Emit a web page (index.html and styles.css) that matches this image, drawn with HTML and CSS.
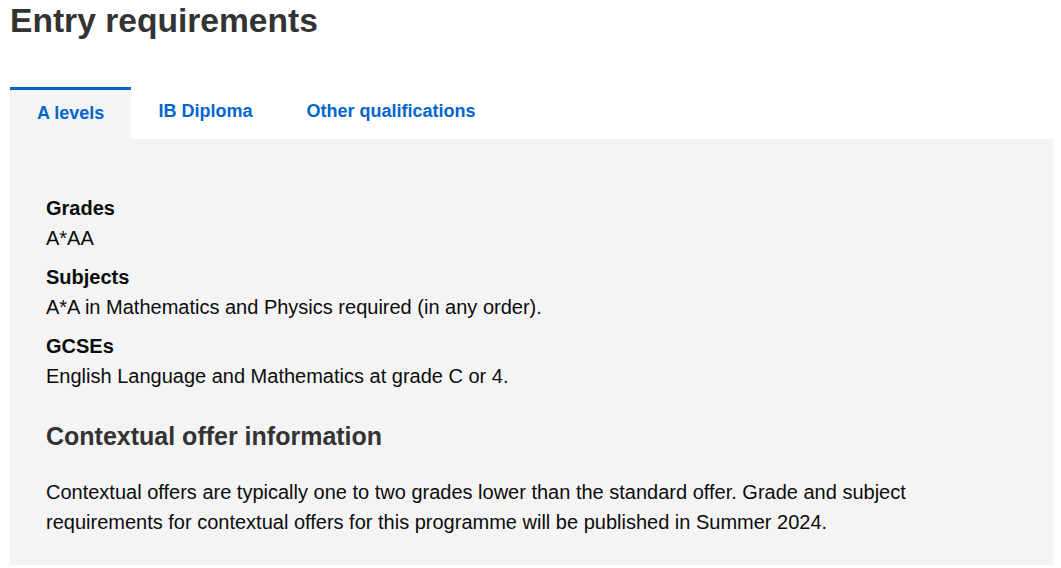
FILE: index.html
```html
<!DOCTYPE html>
<html lang="en">
<head>
    <meta charset="UTF-8">
    <meta name="viewport" content="width=device-width, initial-scale=1.0">
    <title>Entry requirements</title>
    <link rel="stylesheet" href="styles.css">
</head>
<body>
    <section class="entry">
        <h1 class="entry-title">Entry requirements</h1>

        <!-- Tabs -->
        <ul class="tabs">
            <li class="tab active"><a href="#">A levels</a></li>
            <li class="tab"><a href="#">IB Diploma</a></li>
            <li class="tab"><a href="#">Other qualifications</a></li>
        </ul>

        <div class="panel">
            <dl class="reqs">
                <dt>Grades</dt>
                <dd>A*AA</dd>
                <dt>Subjects</dt>
                <dd>A*A in Mathematics and Physics required (in any order).</dd>
                <dt>GCSEs</dt>
                <dd>English Language and Mathematics at grade C or 4.</dd>
            </dl>

            <h2 class="panel-title">Contextual offer information</h2>
            <p class="panel-text">Contextual offers are typically one to two grades lower than the standard offer. Grade and subject requirements for contextual offers for this programme will be published in Summer 2024.</p>
        </div>
    </section>
</body>
</html>
```

FILE: styles.css
```css
body {
    margin: 0 8px 0 10px;
    font-family: "Liberation Sans", Arial, sans-serif;
    background-color: #ffffff;
    color: #0b0c0c;
}

.entry-title {
    margin: 2px 0 0;
    font-size: 33.6px;
    line-height: 38px;
    color: #333333;
}

/* Tabs */
.tabs {
    list-style-type: none;
    margin: 47px 0 0;
    padding: 0;
    display: flex;
    align-items: flex-end;
}

.tab a {
    display: block;
    padding: 0 27px;
    height: 46px;
    line-height: 36px;
    font-size: 18px;
    font-weight: bold;
    color: #0066cc;
    text-decoration: none;
}

.tab.active {
    background-color: #f4f4f4;
    border-top: 3px solid #0066cc;
}

.tab.active a {
    height: 49px;
    line-height: 46px;
}

/* Panel */
.panel {
    background-color: #f4f4f4;
    padding: 54px 36px 28px;
    font-size: 20px;
    line-height: 30px;
}

.reqs {
    margin: 0;
}

.reqs dt {
    font-weight: bold;
}

.reqs dd {
    margin: 0 0 9px;
}

.panel-title {
    margin: 30px 0 26px;
    font-size: 25px;
    line-height: 30px;
    color: #333333;
}

.panel-text {
    margin: 0;
    max-width: 880px;
}
```
